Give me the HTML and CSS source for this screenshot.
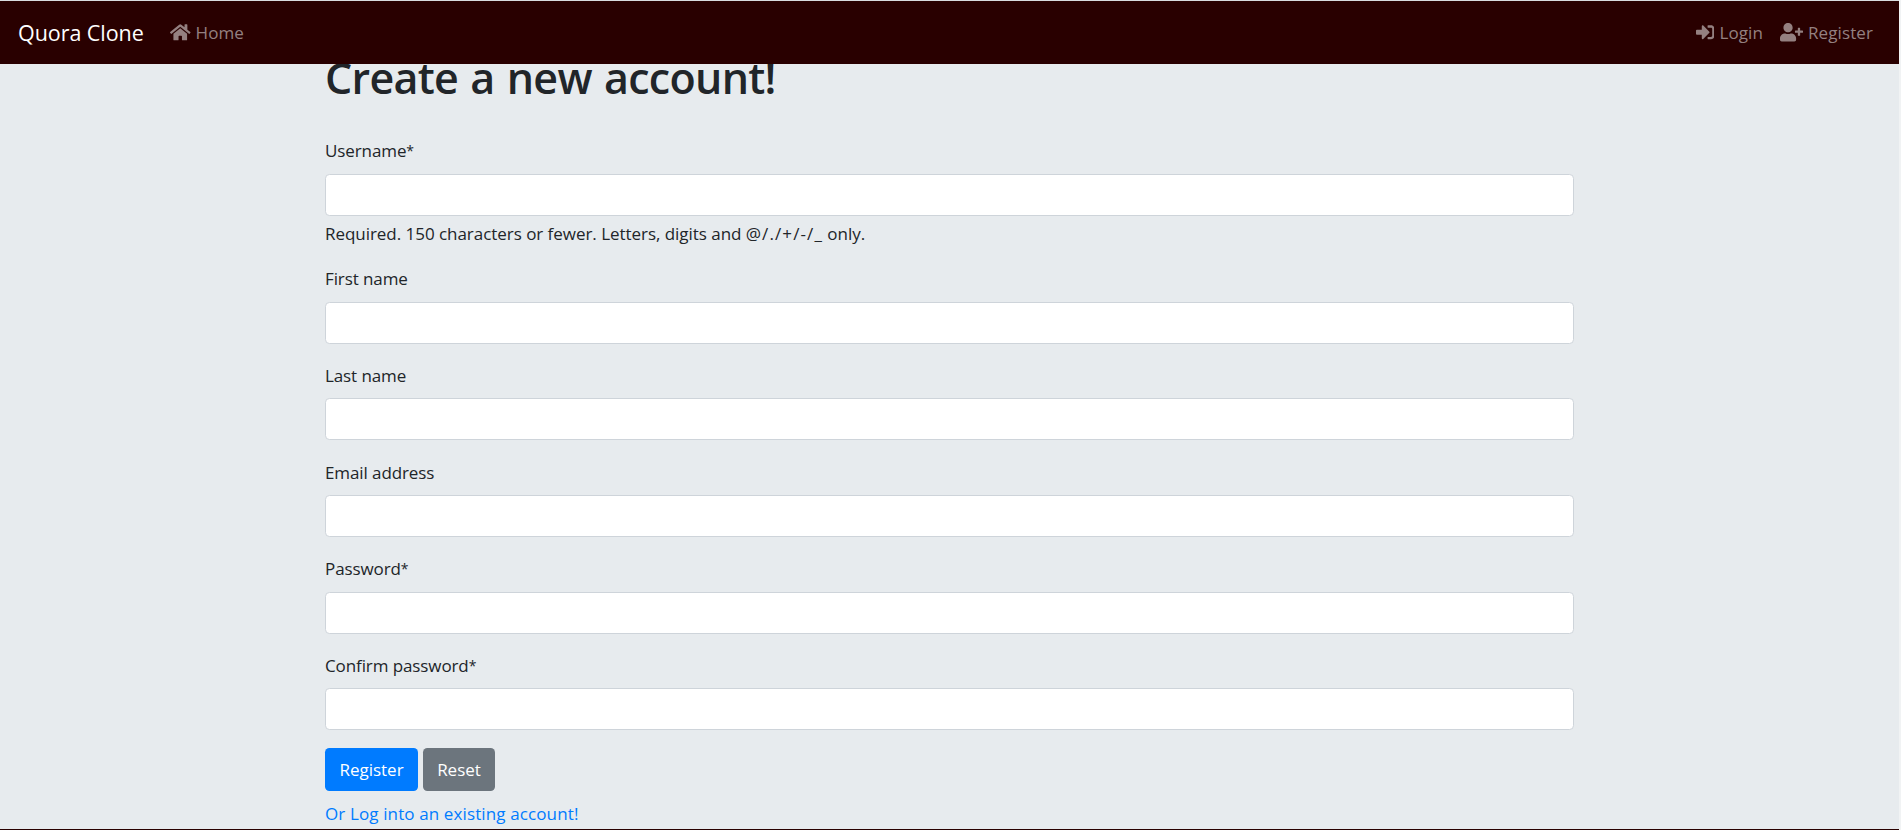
FILE: index.html
```html
<!DOCTYPE html>
<html lang="en">
<head>
<meta charset="utf-8">
<title>Quora Clone</title>
<link rel="stylesheet" href="styles.css">
</head>
<body>
<div class="page">
  <nav class="navbar">
    <a class="brand">Quora Clone</a>
    <a class="nav-link"><svg class="icon icon-home" viewBox="0 0 576 512"><path d="M280.37 148.26L96 300.11V464a16 16 0 0 0 16 16l112.06-.29a16 16 0 0 0 15.92-16V368a16 16 0 0 1 16-16h64a16 16 0 0 1 16 16v95.64a16 16 0 0 0 16 16.05L464 480a16 16 0 0 0 16-16V300L295.67 148.26a12.19 12.19 0 0 0-15.3 0zM571.6 251.47L488 182.56V44.05a12 12 0 0 0-12-12h-56a12 12 0 0 0-12 12v72.61L318.47 43a48 48 0 0 0-61 0L4.34 251.47a12 12 0 0 0-1.6 16.9l25.5 31A12 12 0 0 0 45.15 301l235.22-193.74a12.19 12.19 0 0 1 15.3 0L530.9 301a12 12 0 0 0 16.9-1.6l25.5-31a12 12 0 0 0-1.7-16.93z"/></svg><span>Home</span></a>
    <div class="nav-right">
      <a class="nav-link"><svg class="icon icon-login" viewBox="0 0 512 512"><path d="M416 448h-84c-6.600 0-12-5.400-12-12v-40c0-6.600 5.400-12 12-12h84c17.700 0 32-14.300 32-32V160c0-17.700-14.300-32-32-32h-84c-6.600 0-12-5.400-12-12V76c0-6.600 5.400-12 12-12h84c53 0 96 43 96 96v192c0 53-43 96-96 96zm-47-209L201 71c-15-15-41-4.500-41 17v96H24c-13.300 0-24 10.700-24 24v96c0 13.300 10.700 24 24 24h136v96c0 21.500 26 32 41 17l168-168c9.300-9.400 9.300-24.600 0-34z"/></svg><span>Login</span></a>
      <a class="nav-link"><svg class="icon icon-user" viewBox="0 0 640 512"><path d="M624 208h-64v-64c0-8.800-7.200-16-16-16h-32c-8.800 0-16 7.200-16 16v64h-64c-8.800 0-16 7.200-16 16v32c0 8.800 7.200 16 16 16h64v64c0 8.800 7.200 16 16 16h32c8.800 0 16-7.200 16-16v-64h64c8.800 0 16-7.200 16-16v-32c0-8.800-7.200-16-16-16zm-400 48c70.700 0 128-57.300 128-128S294.700 0 224 0 96 57.300 96 128s57.300 128 128 128zm89.600 32h-16.700c-22.200 10.200-46.900 16-72.900 16s-50.600-5.800-72.900-16h-16.700C60.200 288 0 348.200 0 422.400V464c0 26.500 21.500 48 48 48h352c26.500 0 48-21.500 48-48v-41.600c0-74.200-60.200-134.400-134.400-134.400z"/></svg><span>Register</span></a>
    </div>
  </nav>
  <main class="container">
    <h1>Create a new account!</h1>
    <form>
      <div class="field"><label>Username<span class="star">*</span></label><input type="text"><small>Required. 150 characters or fewer. Letters, digits and <span class="symbols">@/./+/-/_</span> only.</small></div>
      <div class="field"><label>First name</label><input type="text"></div>
      <div class="field"><label>Last name</label><input type="text"></div>
      <div class="field"><label>Email address</label><input type="text"></div>
      <div class="field"><label>Password<span class="star">*</span></label><input type="password"></div>
      <div class="field"><label>Confirm password<span class="star">*</span></label><input type="password"></div>
      <div class="actions"><button type="button" class="btn primary">Register</button><button type="button" class="btn secondary">Reset</button></div>
    </form>
    <a class="login-link">Or Log into an existing account!</a>
  </main>
</div>
</body>
</html>
```
FILE: styles.css
```css
* { box-sizing: border-box; }
body {
  margin: 0;
  height: 830px;
  overflow: hidden;
  background: #f1f3f4;
  color: #212529;
  font-family: "Open Sans", "Noto Sans", sans-serif;
  font-size: 17px;
  line-height: 26.4px;
}
.page {
  width: 1899px;
  height: 830px;
  overflow: hidden;
  display: flex;
  flex-direction: column;
  background: #e7ebee;
  border-top: 1px solid #d9dcdf;
  border-bottom: 1px solid #290000;
}
.navbar {
  position: relative;
  z-index: 1;
  flex: none;
  height: 63px;
  padding: 1px 26px 0 18px;
  display: flex;
  align-items: center;
  background: #290000;
}
.brand { color: #fff; font-size: 21.5px; width: 152px; letter-spacing: -0.05px; }
.nav-link { display: flex; align-items: center; gap: 5px; color: #948080; letter-spacing: 0.1px; }
.nav-link .icon { margin-top: -1px; }
.nav-right { margin-left: auto; display: flex; gap: 17px; }
.icon { height: 18.5px; fill: currentColor; flex: none; }
.icon-home { width: 20.5px; }
.icon-login { width: 18.5px; }
.icon-user { width: 23px; }
.container { width: 1249px; margin-left: 325px; white-space: nowrap; }
h1 {
  margin: -13px 0 32.4px;
  font-size: 43px;
  font-weight: 600;
  line-height: 53px;
  letter-spacing: -0.7px;
  word-spacing: 1.7px;
}
.field { height: 96.6px; }
.field:first-child { height: 128px; }
label { display: block; height: 37.4px; padding-top: 2px; letter-spacing: -0.1px; }
.star { font-size: 14px; position: relative; top: -1px; letter-spacing: -0.5px; }
input {
  display: block;
  width: 100%;
  height: 42px;
  padding: 6px 13px;
  border: 1px solid #ced4da;
  border-radius: 4.4px;
  background: #fff;
}
small { display: block; margin-top: 5px; font-size: 17px; letter-spacing: -0.04px; }
.symbols { letter-spacing: 1.1px; }
.actions { display: flex; gap: 5px; margin-top: 0.6px; }
.btn {
  height: 43px;
  border: 0;
  border-radius: 4.4px;
  color: #fff;
  font: inherit;
  padding: 1px 0 0;
}
.primary { width: 93px; background: #007bff; }
.secondary { width: 72px; background: #6c757d; }
.login-link { display: block; margin-top: 10px; color: #007bff; letter-spacing: 0.12px; }
```
